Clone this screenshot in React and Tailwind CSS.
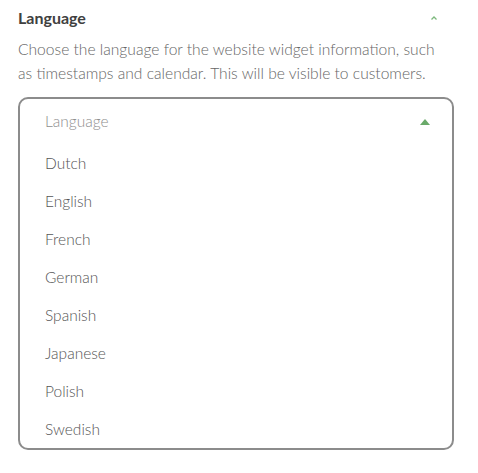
import React from 'react';

const languages = ['Dutch', 'English', 'French', 'German', 'Spanish', 'Japanese', 'Polish', 'Swedish'];

const App = () => {
  return (
    <div className="w-[478px] h-[473px] bg-white px-[18px] pt-[7px] font-['Lato',sans-serif]">
      <div className="flex items-center justify-between h-[22px]">
        <h3 className="text-[16px] font-bold text-[#404040]">Language</h3>
        <svg width="8" height="6" viewBox="0 0 8 6" className="mr-[22px]">
          <path d="M1.5 4.5 L4 2 L6.5 4.5" fill="none" stroke="#7cb87c" strokeWidth="1.3" />
        </svg>
      </div>
      <p className="mt-[8px] text-[15.6px] leading-[24px] font-light text-[#666] pr-[17px]">
        Choose the language for the website widget information, such as timestamps and calendar. This will be visible to customers.
      </p>
      <div className="mt-[12px] w-[436px] h-[353px] border-2 border-[#8c8c8c] rounded-[10px]">
        <div className="flex items-center justify-between h-[45px] pl-[25px] pr-[22px]">
          <span className="text-[15.5px] font-light text-[#8e8e8e]">Language</span>
          <svg width="10" height="8" viewBox="0 0 10 8">
            <path d="M0 7 L5 1 L10 7 Z" fill="#6aaa6a" />
          </svg>
        </div>
        <ul>
          {languages.map((lang) => (
            <li key={lang} className="h-[38px] pt-[2px] flex items-center pl-[25px] text-[15.5px] font-light text-[#555]">
              {lang}
            </li>
          ))}
        </ul>
      </div>
    </div>
  );
};

export default App;
